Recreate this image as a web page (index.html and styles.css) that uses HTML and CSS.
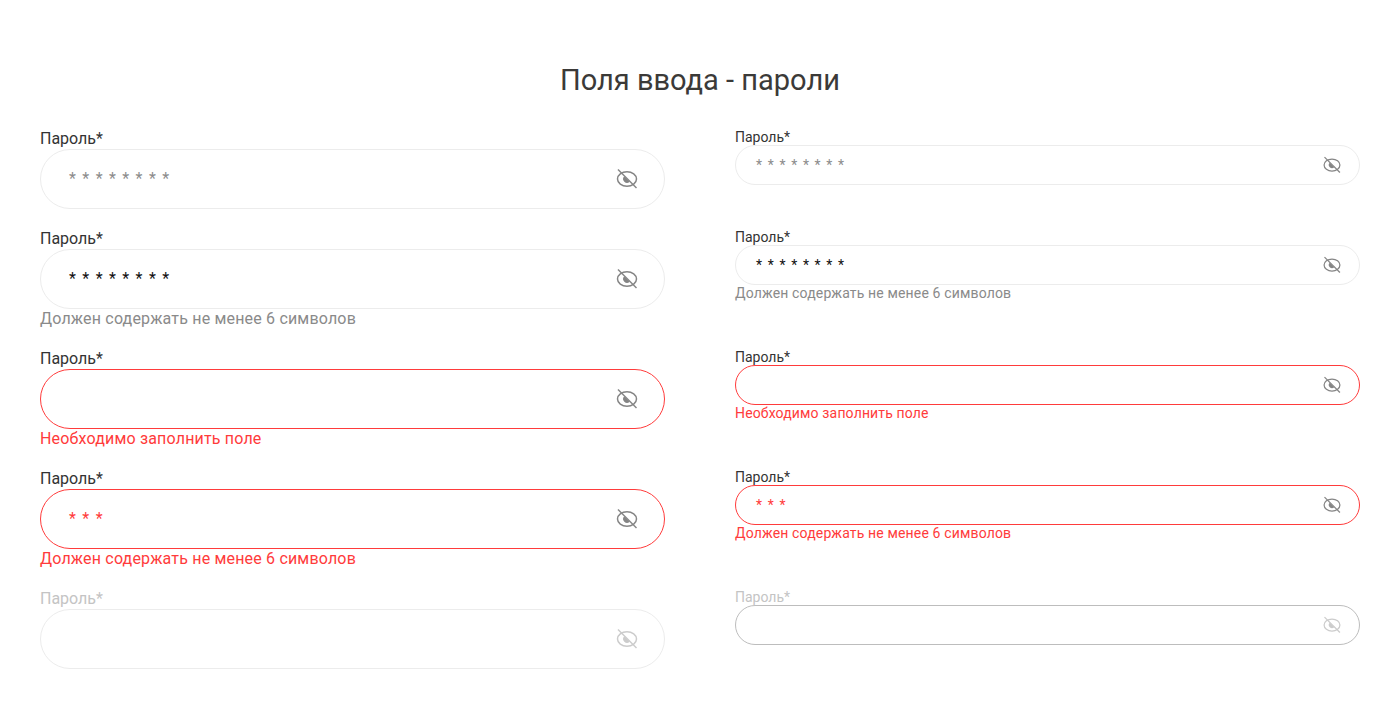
FILE: index.html
```html
<!DOCTYPE html>
<html lang="ru">
<head>
<meta charset="utf-8">
<title>Поля ввода - пароли</title>
<link rel="stylesheet" href="styles.css">
</head>
<body>
<svg class="sprite" width="0" height="0" aria-hidden="true">
  <symbol id="eye" viewBox="0 0 24 24">
    <ellipse cx="12" cy="12" rx="9.500" ry="7.200" fill="none" stroke="currentColor" stroke-width="1.500"/>
    <path d="M9.300 9.300a3.800 3.800 0 0 0 5.400 5.400z" fill="currentColor"/>
    <path d="M3 2.500l18.500 18.500" fill="none" stroke="currentColor" stroke-width="1.500"/>
  </symbol>
</svg>
<main class="page">
  <h1 class="title">Поля ввода - пароли</h1>
  <div class="columns">
    <section class="col col-lg">
      <div class="field">
        <label class="label">Пароль*</label>
        <div class="box"><span class="value placeholder">* * * * * * * *</span><svg class="eye"><use href="#eye"/></svg></div>
      </div>
      <div class="field">
        <label class="label">Пароль*</label>
        <div class="box"><span class="value">* * * * * * * *</span><svg class="eye"><use href="#eye"/></svg></div>
        <p class="hint">Должен содержать не менее 6 символов</p>
      </div>
      <div class="field error">
        <label class="label">Пароль*</label>
        <div class="box"><span class="value"></span><svg class="eye"><use href="#eye"/></svg></div>
        <p class="hint">Необходимо заполнить поле</p>
      </div>
      <div class="field error">
        <label class="label">Пароль*</label>
        <div class="box"><span class="value">* * *</span><svg class="eye"><use href="#eye"/></svg></div>
        <p class="hint">Должен содержать не менее 6 символов</p>
      </div>
      <div class="field disabled">
        <label class="label">Пароль*</label>
        <div class="box"><span class="value"></span><svg class="eye"><use href="#eye"/></svg></div>
      </div>
    </section>
    <section class="col col-sm">
      <div class="field">
        <label class="label">Пароль*</label>
        <div class="box"><span class="value placeholder">* * * * * * * *</span><svg class="eye"><use href="#eye"/></svg></div>
      </div>
      <div class="field">
        <label class="label">Пароль*</label>
        <div class="box"><span class="value">* * * * * * * *</span><svg class="eye"><use href="#eye"/></svg></div>
        <p class="hint">Должен содержать не менее 6 символов</p>
      </div>
      <div class="field error">
        <label class="label">Пароль*</label>
        <div class="box"><span class="value"></span><svg class="eye"><use href="#eye"/></svg></div>
        <p class="hint">Необходимо заполнить поле</p>
      </div>
      <div class="field error">
        <label class="label">Пароль*</label>
        <div class="box"><span class="value">* * *</span><svg class="eye"><use href="#eye"/></svg></div>
        <p class="hint">Должен содержать не менее 6 символов</p>
      </div>
      <div class="field disabled">
        <label class="label">Пароль*</label>
        <div class="box"><span class="value"></span><svg class="eye"><use href="#eye"/></svg></div>
      </div>
    </section>
  </div>
</main>
</body>
</html>
```
FILE: styles.css
```css
* { box-sizing: border-box; }
html, body { margin: 0; padding: 0; background: #fff; }
body { font-family: Roboto, "Noto Sans", sans-serif; color: #333; overflow: hidden; }
.sprite { position: absolute; }
.page { width: 1400px; height: 705px; padding: 60px 40px 0; }
.title {
  margin: 0 0 27px;
  height: 42px;
  font-size: 29px;
  line-height: 40px;
  font-weight: 400;
  text-align: center;
  color: #3b3a38;
}
.columns { display: grid; grid-template-columns: 625px 625px; column-gap: 70px; }
.col { display: flex; flex-direction: column; }
.col-lg { gap: 20px; }
.col-sm { gap: 42px; margin-top: -2px; }
.field { display: flex; flex-direction: column; }
.label { display: block; height: 20px; font-size: 16px; line-height: 20px; color: #333; }
.box {
  display: flex;
  align-items: center;
  justify-content: space-between;
  height: 60px;
  padding: 0 25px 0 28px;
  border: 1px solid #ececec;
  border-radius: 30px;
  background: #fff;
}
.value { font-size: 16px; line-height: 20px; letter-spacing: 1.23px; color: #111; white-space: pre; }
.value.placeholder { color: #8c8c8c; }
.eye { width: 24px; height: 24px; color: #858585; }
.hint { margin: 0; height: 20px; font-size: 16px; line-height: 20px; color: #8a8a8a; letter-spacing: 0.18px; }
.error .box { border-color: #ff3b3b; }
.error .value, .error .hint { color: #ff3b3b; }
.disabled .label { color: #c4c4c4; }
.disabled .eye { color: #cccccc; }
.col-sm .label { height: 18px; font-size: 14px; line-height: 20px; }
.col-sm .box { height: 40px; border-radius: 20px; padding: 0 17px 0 20px; }
.col-sm .value { font-size: 14px; letter-spacing: 1.11px; }
.col-sm .eye { width: 20px; height: 20px; }
.col-sm .hint { font-size: 14px; line-height: 16px; letter-spacing: 0.15px; }
.col-sm .disabled .box { border-color: #bdbdbd; }
```
